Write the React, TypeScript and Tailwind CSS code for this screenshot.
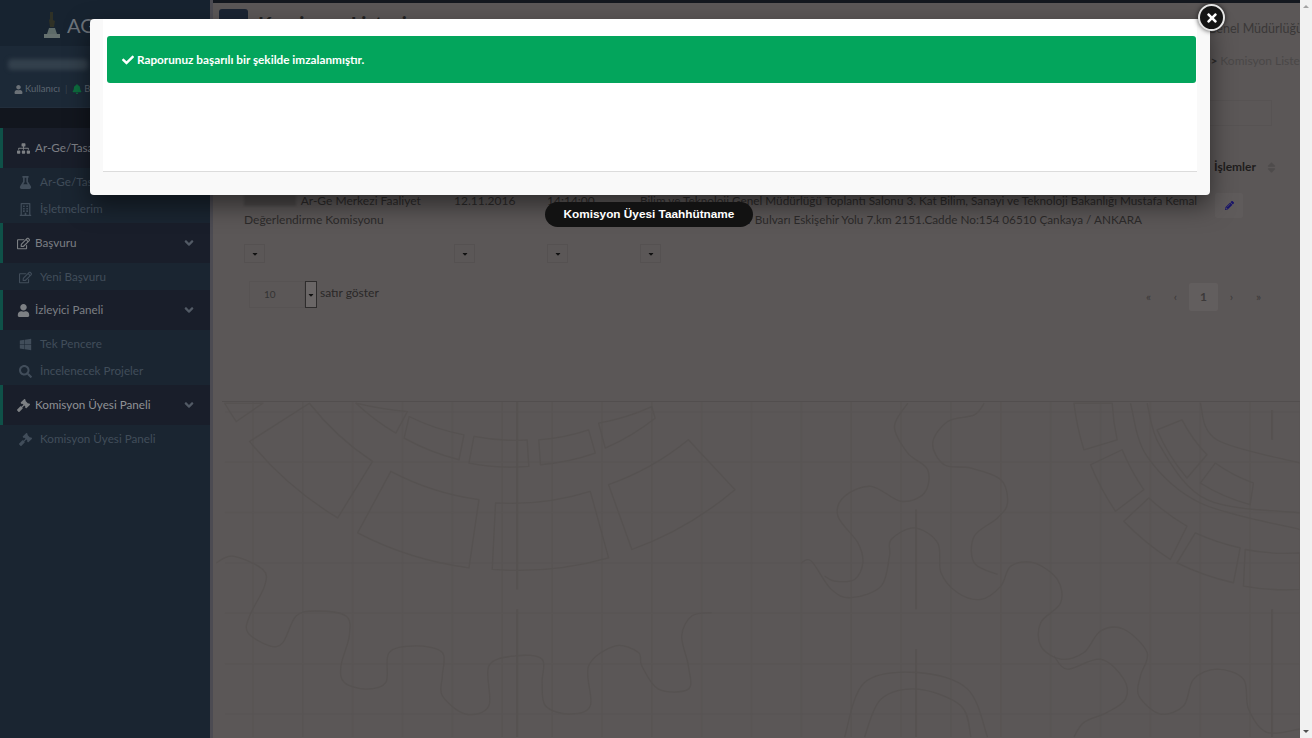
import React from "react";
import {
  FaSitemap, FaFlask, FaRegBuilding, FaRegEdit, FaUser, FaWindows, FaSearch, FaGavel,
  FaBell, FaCheck, FaTimes, FaPencilAlt, FaSort, FaAngleDown, FaCaretDown,
} from "react-icons/fa";

type P = [number, number];
const smooth = (pts: P[]) => {
  let d = `M${pts[0][0]} ${pts[0][1]}`;
  for (let i = 0; i < pts.length - 1; i++) {
    const a = pts[Math.max(i - 1, 0)], b = pts[i], c = pts[i + 1], e = pts[Math.min(i + 2, pts.length - 1)];
    d += ` C${b[0] + (c[0] - a[0]) / 6} ${b[1] + (c[1] - a[1]) / 6} ${c[0] - (e[0] - b[0]) / 6} ${c[1] - (e[1] - b[1]) / 6} ${c[0]} ${c[1]}`;
  }
  return d;
};
const z5 = (l: number[]) => { const r: P[] = []; for (let i = 0; i < l.length; i += 2) r.push([l[i] / 3, 390 + l[i + 1] / 3]); return r; };
const z6 = (l: number[]) => { const r: P[] = []; for (let i = 0; i < l.length; i += 2) r.push([590 + l[i] / 3, 390 + l[i + 1] / 3]); return r; };

// A gear tooth: edges running round the gear's centre bow outward, the others stay straight.
const tooth = (pts: P[], c: P) => {
  let d = `M${pts[0][0]} ${pts[0][1]}`;
  for (let i = 0; i < pts.length; i++) {
    const p = pts[i], q = pts[(i + 1) % pts.length];
    const r0 = Math.hypot(p[0] - c[0], p[1] - c[1]), r1 = Math.hypot(q[0] - c[0], q[1] - c[1]);
    const mx = (p[0] + q[0]) / 2, my = (p[1] + q[1]) / 2, rm = Math.hypot(mx - c[0], my - c[1]);
    if (Math.abs(r0 - r1) < 0.12 * (r0 + r1) / 2) {
      const R = (r0 + r1) / 2, k = (2 * R - rm) / rm;
      d += ` Q${c[0] + (mx - c[0]) * k} ${c[1] + (my - c[1]) * k} ${q[0]} ${q[1]}`;
    } else d += ` L${q[0]} ${q[1]}`;
  }
  return d + "Z";
};

const curves = [
  z5([10,520,60,500,150,540,155,590,110,680,105,730,170,770,210,760,250,680,310,665,400,680,410,740,385,830,395,880,460,900,520,880,530,790,610,770,690,790,690,860,690,920,760,975,830,950,830,830,910,800,990,810,990,880,1000,950,1070,975,1135,950,1130,830,1210,770,1280,790,1290,830,1340,900,1430,900,1430,830,1410,740,1440,680,1500,670]),
  z6([0,520,30,515,90,600,150,625,240,590,265,500,270,450,340,415,410,460,420,550,470,610,540,630,600,590,630,530,700,520,770,570,780,640,720,700,720,770,780,810,850,790,900,725,970,720,1040,790,1020,860,1015,920,1080,975,1150,950,1180,870,1250,840,1330,870,1345,960,1400,1030,1500,1020]),
  z6([550,40,520,75,440,95,395,160,430,225,510,235,600,270,620,340,590,385,520,440,520,520,590,555]),
  z6([320,40,280,110,320,190,380,240,370,310,300,335,210,290,130,320,110,380,170,460,185,520,160,570,100,575,70,560]),
  z6([760,800,800,840,900,810,970,870,975,930,920,970,850,1000,820,1044]),
  z6([130,1044,190,880,350,850,500,900,560,1044]),
  z6([190,1044,240,930,350,900,480,950,510,1044]),
  z6([1200,40,1250,150,1500,220]),
  z6([990,40,1040,200,1200,340,1500,420]),
  z6([1040,40,1080,170,1220,330,1500,370]),
];
const leftGear: P = [305, 240];
const rightGear: P = [1110, 357];
const leftTeeth = [
  z5([110,155,290,40,480,215,375,385]), z5([535,245,800,330,770,535,435,430]), z5([850,340,1135,305,1190,505,840,540]),
  z5([1190,285,1430,150,1570,300,1260,480]), z5([590,80,755,135,740,210,575,145]), z5([785,140,945,150,950,230,770,220]),
  z5([980,150,1130,120,1150,190,985,225]), z5([1160,100,1320,50,1330,85,1180,175]), z5([430,40,585,65,550,130]), z5([35,40,70,95,150,40]),
];
const rightTeeth = [
  z6([820,40,850,180,950,150,935,40]), z6([870,225,965,180,1030,300,945,365]), z6([970,395,1045,325,1160,410,1110,510]),
  z6([1185,430,1320,475,1300,580,1130,520]), z6([1335,480,1500,490,1500,600,1330,590]), z6([1070,120,1145,90,1220,195,1160,265]),
  z6([1200,280,1245,220,1360,280,1350,345]),
];
const gridV = Array.from({ length: 22 }, (_, i) => 40 + i * 50);
const gridH = Array.from({ length: 7 }, (_, i) => 412 + i * 50.5);
const LINE = "#565251";
const GRID = "#595554";

function Backdrop() {
  return (
    <svg className="absolute inset-0 h-full w-full" viewBox="0 0 1090 738" fill="none">
      {gridV.map((x) => <path key={x} d={`M${x} 402V738`} stroke={GRID} strokeWidth="1.5" />)}
      {gridH.map((y) => <path key={y} d={`M12 ${y}H1090`} stroke={GRID} strokeWidth="1.5" />)}
      <path d="M305 402V590M305 610V738M705 510V610M705 650V738M1062 410V440M1062 610V738" stroke={LINE} strokeWidth="2" />
      {leftTeeth.map((s, i) => <path key={i} d={tooth(s, leftGear)} stroke={LINE} strokeWidth="1.3" strokeLinejoin="round" />)}
      {rightTeeth.map((s, i) => <path key={i} d={tooth(s, rightGear)} stroke={LINE} strokeWidth="1.3" strokeLinejoin="round" />)}
      {curves.map((c, i) => <path key={i} d={smooth(c)} stroke={LINE} strokeWidth="1.3" />)}
    </svg>
  );
}

function Section({ icon, label, bright = false }: { icon: React.ReactNode; label: string; bright?: boolean }) {
  return (
    <div className="flex h-10 items-center border-l-[3px] border-[#0f5148] bg-[#191e2a] pl-[11px] pr-[14px]">
      <span className="flex w-[18px] justify-center text-[13px] text-[#7d8084]">{icon}</span>
      <span className={`flex-1 pl-[3px] text-[11.7px] ${bright ? "text-[#8f9195]" : "text-[#7c7e84]"}`}>{label}</span>
      <FaAngleDown className="text-[14px] text-[#525a65]" />
    </div>
  );
}

function Item({ icon, label }: { icon: React.ReactNode; label: string }) {
  return (
    <div className="flex h-[27px] items-center gap-[8px] pl-[18px] pt-[1px] text-[11.7px] text-[#414d5a]">
      <span className="flex w-[14px] justify-center text-[13px]">{icon}</span>
      <span>{label}</span>
    </div>
  );
}

function SmallSelect() {
  return (
    <div className="flex h-[19px] w-[21px] items-center justify-center border border-[#555151]">
      <FaCaretDown className="text-[8px] text-[#111]" />
    </div>
  );
}

export default function App() {
  return (
    <div className="relative flex h-[738px] w-[1312px] overflow-hidden bg-[#5b5757] font-['Lato','Open_Sans',sans-serif]">
      <aside className="flex w-[210px] shrink-0 flex-col bg-[#1a2531]">
        <div className="flex h-[46px] items-center gap-[6px] bg-[#172330] pl-[43px] pt-1">
          <svg width="18" height="28" viewBox="0 0 18 28">
            <path d="M7 1h3v8l2 1-1 6H7L6 9l1-1z" fill="#2f3126" />
            <path d="M6 17h6l2 6H4z" fill="#5d6a68" />
            <rect x="1" y="23" width="16" height="4" fill="#66716f" />
          </svg>
          <span className="text-[20px] leading-none text-[#6e747b]">AGTM Portalı</span>
        </div>
        <div className="h-[62px] border-b border-[#222e3c] bg-[#1c2937] pl-2">
          <div className="mt-[13px] h-[11px] w-[80px] rounded-sm bg-[#33404c] blur-[2px]" />
          <div className="mt-[12px] flex items-center gap-[2px] pl-[6px] text-[9.5px] text-[#5d6670]">
            <FaUser className="text-[9px] text-[#6b7177]" />
            <span>Kullanıcı</span>
            <span className="px-[3px] text-[#39434e]">|</span>
            <FaBell className="text-[10px] text-[#0d6d3e]" />
            <span>Bildirim</span>
          </div>
        </div>
        <div className="h-5 bg-[#12161e]" />
        <Section icon={<FaSitemap />} label="Ar-Ge/Tasarım" />
        <div className="flex h-[55px] flex-col">
          <Item icon={<FaFlask />} label="Ar-Ge/Tasarım Merkezi" />
          <Item icon={<FaRegBuilding />} label="İşletmelerim" />
        </div>
        <Section icon={<FaRegEdit />} label="Başvuru" />
        <Item icon={<FaRegEdit />} label="Yeni Başvuru" />
        <Section icon={<FaUser />} label="İzleyici Paneli" />
        <div className="flex h-[55px] flex-col">
          <Item icon={<FaWindows />} label="Tek Pencere" />
          <Item icon={<FaSearch />} label="İncelenecek Projeler" />
        </div>
        <Section icon={<FaGavel />} label="Komisyon Üyesi Paneli" bright />
        <Item icon={<FaGavel />} label="Komisyon Üyesi Paneli" />
      </aside>

      <main className="relative flex min-w-0 flex-1 flex-col overflow-hidden border-l-[3px] border-[#4c4b52] text-[12px] text-[#2c2a2a]">
        <Backdrop />
        <div className="relative h-[3px] shrink-0 bg-[#14181f]" />
        <header className="relative -mr-[3px] flex h-[43px] shrink-0 items-start justify-between pt-[6px] pl-[6px]">
          <div className="flex items-center gap-[10px]">
            <div className="h-[30px] w-[29px] rounded-[3px] bg-[#1b2433]" />
            <span className="text-[20px] font-bold text-[#222]">Komisyon Listesi</span>
          </div>
          <span className="whitespace-nowrap pt-[11px] text-[12.5px] text-[#3a3838]">Bilim ve Teknoloji Genel Müdürlüğü</span>
        </header>
        <div className="relative -mr-[8px] flex h-[39px] shrink-0 items-center justify-end whitespace-nowrap pb-[9px] text-[#4a4747]">
          <span className="font-bold text-[#2f2d2d]">&gt;&nbsp;</span>Komisyon Listesi
        </div>

        <section className="relative ml-[9px] flex h-[317px] shrink-0 flex-col border-b border-[#524e4e] bg-[#5b5757] pl-[22px] pr-[28px]">
          <div className="flex justify-end pt-[15px]">
            <div className="h-[26px] w-[180px] border border-[#575353]" />
          </div>
          <div className="-mr-[6px] mt-[29px] flex h-[24px] items-center justify-end">
            <span className="w-[43px] whitespace-nowrap font-bold text-[#1f1d1d]">İşlemler</span>
            <FaSort className="ml-[8px] text-[13px] text-[#4e4b4b]" />
          </div>
          <div className="mt-[13px] grid h-[46px] grid-cols-[210px_93px_93px_575px_1fr] leading-[18.5px]">
            <div>
              <span className="mr-[2px] inline-block h-[11px] w-[52px] bg-[#4c4949] align-[-1px] blur-[1px]" /> Ar-Ge Merkezi Faaliyet<br />Değerlendirme Komisyonu
            </div>
            <div>12.11.2016</div>
            <div>14:14:00</div>
            <div className="whitespace-nowrap text-[11.75px]">
              Bilim ve Teknoloji Genel Müdürlüğü Toplantı Salonu 3. Kat Bilim, Sanayi ve Teknoloji Bakanlığı Mustafa Kemal<br />
              Mahallesi Dumlupınar Bulvarı Eskişehir Yolu 7.km 2151.Cadde No:154 06510 Çankaya / ANKARA
            </div>
            <div className="flex justify-start">
              <div className="mt-[1px] flex h-[25px] w-[28px] items-center justify-center rounded-[2px] bg-[#5f5b5b]">
                <FaPencilAlt className="text-[9px] text-[#17136b]" />
              </div>
            </div>
          </div>
          <div className="mt-[6px] grid grid-cols-[210px_93px_93px_575px_1fr]">
            <SmallSelect /><SmallSelect /><SmallSelect /><SmallSelect />
          </div>
          <div className="mt-[18px] flex items-start justify-between pl-[5px]">
            <div className="flex items-center">
              <div className="flex h-[27px] w-[56px] items-center border border-[#575353] pl-[14px] text-[10px] text-[#333]">10</div>
              <div className="flex h-[27px] w-[12px] items-center justify-center border border-[#2e2c2c] bg-[#6a6666]">
                <FaCaretDown className="text-[8px] text-[#111]" />
              </div>
              <span className="relative -top-[2px] pl-[3px] text-[#2a2828]">satır göster</span>
            </div>
            <div className="mt-[2px] flex items-center text-[#3c3939]">
              <span className="w-[27px] text-center">«</span>
              <span className="w-[27px] text-center">‹</span>
              <span className="flex h-[28px] w-[29px] items-center justify-center rounded-[2px] bg-[#625e5e] font-bold">1</span>
              <span className="w-[27px] text-center">›</span>
              <span className="w-[27px] text-center">»</span>
            </div>
          </div>
        </section>
      </main>

      <div className="flex w-3 shrink-0 flex-col items-center justify-between bg-[#f1f1f1] py-[5px]">
        <span className="h-0 w-0 border-x-[3px] border-b-[3px] border-x-transparent border-b-[#a3a3a3]" />
        <span className="h-0 w-0 border-x-[3px] border-t-[3px] border-x-transparent border-t-[#505050]" />
      </div>

      <div className="absolute left-[90px] top-[19px] h-[176px] w-[1120px] rounded-[4px] bg-[#f9f9f9] px-[13px] shadow-[0_10px_25px_rgba(0,0,0,0.5)]">
        <div className="h-[153px] border-b border-[#dcdcdc] bg-white px-[4px] pt-[17px]">
          <div className="flex h-[47px] w-[1089px] items-center gap-[3px] rounded-[3px] bg-[#03a55c] pl-[15px] pt-[1px] text-[11.75px] font-bold text-white">
            <FaCheck className="text-[12px]" />
            <span>Raporunuz başarılı bir şekilde imzalanmıştır.</span>
          </div>
        </div>
        <button className="absolute -right-[15px] -top-[15px] flex h-[27px] w-[27px] items-center justify-center rounded-full border-2 border-[#e4e4e4] bg-[#141414] shadow-[0_0_5px_rgba(0,0,0,0.7)]">
          <FaTimes className="text-[14px] text-white" />
        </button>
      </div>

      <div className="absolute left-[545px] top-[202px] flex h-[25px] w-[208px] items-center justify-center rounded-full bg-[#121212] font-['Liberation_Sans',sans-serif] text-[11.8px] font-bold text-white">
        Komisyon Üyesi Taahhütname
      </div>
    </div>
  );
}
